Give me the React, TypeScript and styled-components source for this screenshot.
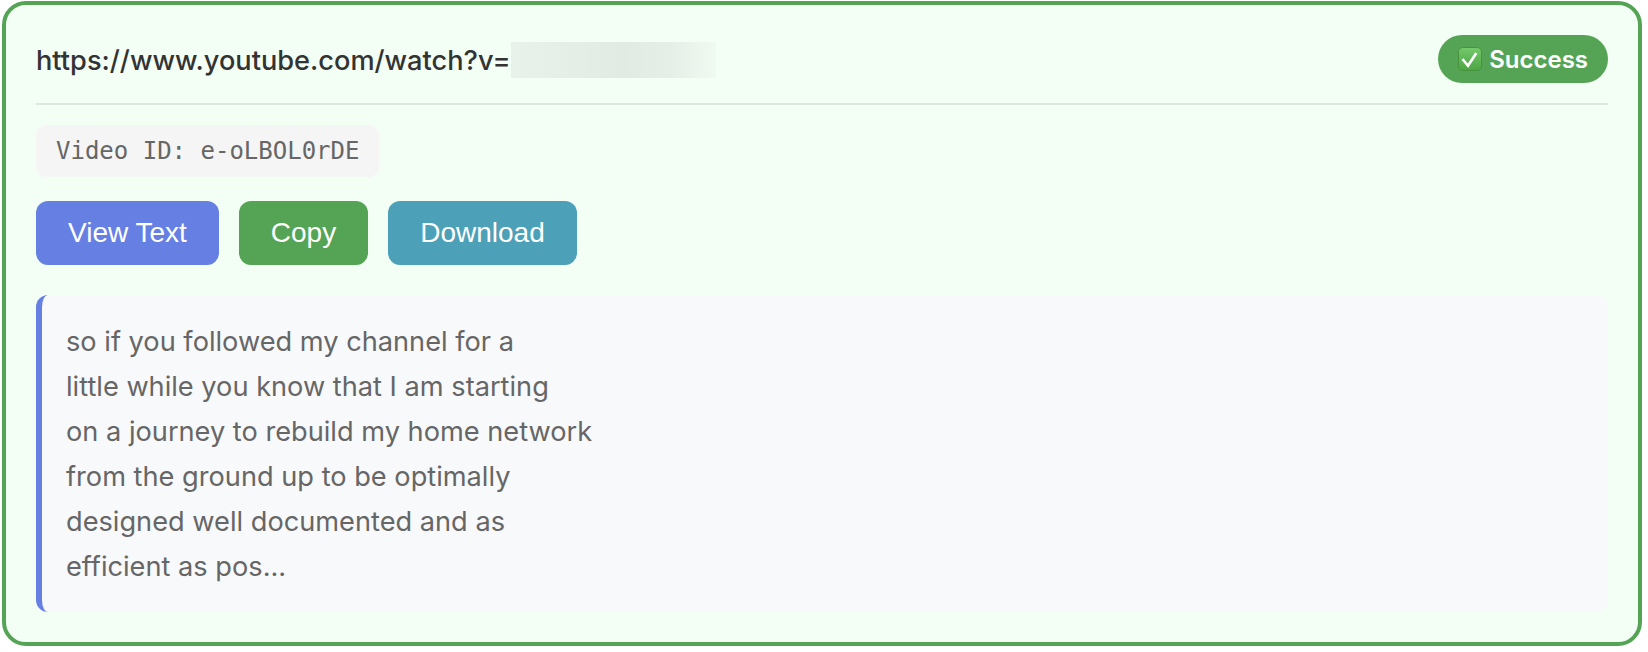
import React from 'react'
import styled, { createGlobalStyle } from 'styled-components'

const GlobalStyle = createGlobalStyle`
  html, body {
    margin: 0;
    padding: 0;
    background: #ffffff;
  }
  body {
    padding: 1px 6px 0 2px;
    font-family: Inter, "Liberation Sans", sans-serif;
  }
  * {
    box-sizing: border-box;
  }
`

const Card = styled.div`
  width: 1640px;
  padding: 30px;
  background: #f3fff5;
  border: 4px solid #55a455;
  border-radius: 24px;
`

const Header = styled.div`
  display: flex;
  align-items: center;
  justify-content: space-between;
  padding-bottom: 20px;
  margin-bottom: 20px;
  border-bottom: 2px solid #dfe5df;
`

const Url = styled.div`
  display: flex;
  align-items: center;
  padding-top: 2px;
  font-size: 27.2px;
  font-weight: 450;
  color: #333333;
`

const Redacted = styled.span`
  display: block;
  width: 205px;
  height: 36px;
  background: linear-gradient(90deg, #e9f2ea 0%, #e6efe7 25%, #e2ebe3 55%, #e6efe7 78%, #f0faf1 100%);
`

const Badge = styled.div`
  display: flex;
  align-items: center;
  gap: 7px;
  height: 48px;
  padding: 0 20px;
  border-radius: 24px;
  background: #55a455;
  color: #ffffff;
  font-size: 24px;
  font-weight: 600;
`

const VideoId = styled.div`
  display: inline-block;
  height: 52px;
  padding: 0 20px;
  margin-bottom: 24px;
  border-radius: 10px;
  background: #f5f5f5;
  color: #666666;
  font-family: "DejaVu Sans Mono", "Liberation Mono", monospace;
  font-size: 24px;
  line-height: 52px;
`

const Actions = styled.div`
  display: flex;
  gap: 20px;
  margin-bottom: 30px;
`

const Action = styled.button<{ $tone: string }>`
  height: 64px;
  padding: 0 32px;
  border: none;
  border-radius: 12px;
  background: ${(p) => p.$tone};
  color: #ffffff;
  font-family: "Liberation Sans", Arial, sans-serif;
  font-size: 28px;
`

const Transcript = styled.div`
  padding: 24px 24px 23px;
  border-left: 6px solid #667fe3;
  border-radius: 12px;
  background: #f8f9fb;
  color: #666666;
  font-size: 27.2px;
  line-height: 45px;
`

const lines = [
  'so if you followed my channel for a',
  'little while you know that I am starting',
  'on a journey to rebuild my home network',
  'from the ground up to be optimally',
  'designed well documented and as',
  'efficient as pos...',
]

const CheckEmoji = () => (
  <svg width="24" height="24" viewBox="0 0 24 24" aria-hidden="true">
    <defs>
      <linearGradient id="tick" x1="0" y1="0" x2="0" y2="1">
        <stop offset="0" stopColor="#74c96a" />
        <stop offset="1" stopColor="#4da544" />
      </linearGradient>
    </defs>
    <rect x="0.5" y="0.5" width="23" height="23" rx="4" fill="url(#tick)" stroke="#48923f" />
    <path d="M4.5 12l5.5 6.7L18.3 6" fill="none" stroke="#ffffff" strokeWidth="2.6" />
  </svg>
)

const App = () => {
  return (
    <Card>
      <GlobalStyle />
      <Header>
        <Url>
          https://www.youtube.com/watch?v=
          <Redacted />
        </Url>
        <Badge>
          <CheckEmoji />
          Success
        </Badge>
      </Header>
      <VideoId>Video ID: e-oLBOL0rDE</VideoId>
      <Actions>
        <Action $tone="#667fe3">View Text</Action>
        <Action $tone="#55a455">Copy</Action>
        <Action $tone="#4ca1b8">Download</Action>
      </Actions>
      <Transcript>
        {lines.map((line) => (
          <div key={line}>{line}</div>
        ))}
      </Transcript>
    </Card>
  )
}

export default App
